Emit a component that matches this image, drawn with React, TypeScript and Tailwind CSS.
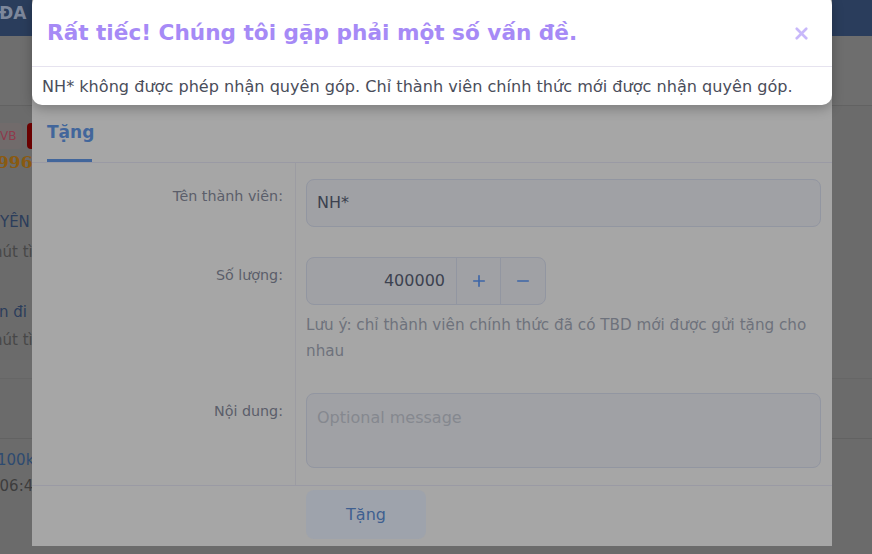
import { X, Plus, Minus } from 'lucide-react';

const sans = { fontFamily: '"DejaVu Sans", Verdana, sans-serif' };

function PageBehind() {
    return (
        <div className="flex flex-col w-full h-full overflow-hidden">
            {/* top nav */}
            <div className="h-[36px] bg-[#2a3d5c] flex items-center shrink-0">
                <span className="ml-[-1px] text-[17px] font-bold text-[#7d879b] leading-none mt-[-10px]">ĐA</span>
            </div>
            <div className="h-[70px] bg-[#6e6e6e] border-b border-[#626262] shrink-0" />

            {/* list content, mostly hidden behind the modal */}
            <div className="flex flex-col">
                <div className="flex items-center gap-[5px] mt-[17px] h-[26px] ml-[-6px]">
                    <span className="h-[26px] px-[6px] rounded-[4px] bg-[#716b6b] text-[#8e3a4c] text-[12px] flex items-center">VB</span>
                    <span className="h-[26px] w-[20px] rounded-l-[4px] bg-[#6a0000]" />
                </div>
                <div
                    className="mt-[3px] text-[17px] font-bold text-[#8a5a10] leading-[20px] ml-[-3px]"
                    style={{ fontFamily: '"DejaVu Serif", serif' }}
                >
                    996
                </div>
                <div className="mt-[40px] text-[15px] text-[#2b3d5b] leading-[20px] ml-[-11px] whitespace-nowrap">UYÊN - CHÚT</div>
                <div className="mt-[10px] text-[15px] text-[#474747] leading-[20px] ml-[-7px] whitespace-nowrap">hút tình</div>
                <div className="mt-[40px] text-[15px] text-[#2b3d5b] leading-[20px] ml-[-1px] whitespace-nowrap">n đi chơi</div>
                <div className="mt-[8px] text-[15px] text-[#474747] leading-[20px] ml-[-7px] whitespace-nowrap">hút tình</div>
                <div className="mt-[10px] h-[19px] bg-[#6c6c6c] border-b border-[#666666]" />
                <div className="mt-[59px] border-t border-[#626262]" />
                <div className="mt-[11px] text-[15px] text-[#2d4a70] leading-[20px] ml-[-3px] whitespace-nowrap">100k</div>
                <div className="mt-[6px] text-[15px] text-[#3d3d3d] leading-[20px] ml-[-10px] whitespace-nowrap">106:45</div>
            </div>
        </div>
    );
}

function GiftModal() {
    return (
        <div className="absolute left-[32px] top-0 w-[800px] h-[546px] bg-[#a6a6a6] flex flex-col">
            <div className="h-[104px] shrink-0" />

            {/* tabs */}
            <div className="h-[59px] shrink-0 flex items-end px-[15px] border-b border-[#9a9aa4]">
                <div className="flex flex-col">
                    <span className="text-[17px] font-bold text-[#42669b] leading-[22px] pb-[16px]">Tặng</span>
                    <span className="h-[3px] w-[45px] bg-[#42669b]" />
                </div>
            </div>

            {/* form */}
            <div className="flex flex-col">
                <div className="flex">
                    <div className="w-[264px] shrink-0 border-r border-[#9c9ca2] text-right pr-[12px] pt-[23px] text-[14.3px] leading-[20px] text-[#5b5e6a]">
                        Tên thành viên:
                    </div>
                    <div className="flex-1 pl-[10px] pr-[11px] pt-[16px]">
                        <div className="h-[48px] rounded-[8px] bg-[#a0a1a5] border border-[#9296a1] flex items-center px-[10px] text-[16px] text-[#3c4150]">
                            NH*
                        </div>
                    </div>
                </div>

                <div className="flex">
                    <div className="w-[264px] shrink-0 border-r border-[#9c9ca2] text-right pr-[12px] pt-[38px] text-[14.3px] leading-[20px] text-[#5b5e6a]">
                        Số lượng:
                    </div>
                    <div className="flex-1 pl-[10px] pr-[11px] pt-[30px]">
                        <div className="w-[240px] h-[48px] rounded-[8px] bg-[#a0a1a5] border border-[#9296a1] flex">
                            <div className="w-[149px] flex items-center justify-end pr-[11px] text-[16px] text-[#3c4150]">400000</div>
                            <div className="w-[44px] border-l border-[#9296a1] flex items-center justify-center text-[#3d66a8]">
                                <Plus size={18} strokeWidth={2.2} />
                            </div>
                            <div className="flex-1 border-l border-[#9296a1] flex items-center justify-center text-[#3d66a8]">
                                <Minus size={18} strokeWidth={2.2} />
                            </div>
                        </div>
                        <p className="mt-[7px] text-[15.2px] leading-[26px] text-[#6e727c] pr-[8px]">
                            Lưu ý: chỉ thành viên chính thức đã có TBD mới được gửi tặng cho nhau
                        </p>
                    </div>
                </div>

                <div className="flex">
                    <div className="w-[264px] shrink-0 border-r border-[#9c9ca2] text-right pr-[12px] pt-[37px] pb-[17px] text-[14.3px] leading-[20px] text-[#5b5e6a]">
                        Nội dung:
                    </div>
                    <div className="flex-1 pl-[10px] pr-[11px] pt-[29px] pb-[17px]">
                        <div className="h-[75px] rounded-[8px] bg-[#a0a1a5] border border-[#9296a1] px-[10px] pt-[13px] text-[16px] leading-[22px] text-[#85888f]">
                            Optional message
                        </div>
                    </div>
                </div>
            </div>

            {/* footer */}
            <div className="border-t border-[#9a9aa4] pt-[4px] pl-[274px]">
                <button className="w-[120px] h-[49px] rounded-[8px] bg-[#9ea3ac] text-[16px] text-[#3f5f90]">
                    Tặng
                </button>
            </div>
        </div>
    );
}

function ErrorAlert() {
    return (
        <div className="absolute left-[32px] top-[-5px] w-[800px] bg-white rounded-[10px] shadow-[0_4px_12px_rgba(0,0,0,0.25)]">
            <div className="h-[72px] flex items-center justify-between pl-[15px] pr-[21px] pt-[5px] border-b border-[#e6e3ef]">
                <h2 className="text-[21.6px] font-bold text-[#a68af6] leading-none">
                    Rất tiếc! Chúng tôi gặp phải một số vấn đề.
                </h2>
                <X size={19} strokeWidth={3.4} className="text-[#c8b8fa]" />
            </div>
            <div className="h-[38px] flex items-center px-[10px] pt-[2px] text-[16.1px] text-[#4a4d5a]">
                NH* không được phép nhận quyên góp. Chỉ thành viên chính thức mới được nhận quyên góp.
            </div>
        </div>
    );
}

export default function App() {
    return (
        <div className="relative w-[872px] h-[554px] overflow-hidden bg-[#6b6b6b]" style={sans}>
            <PageBehind />
            <GiftModal />
            <ErrorAlert />
        </div>
    );
}
